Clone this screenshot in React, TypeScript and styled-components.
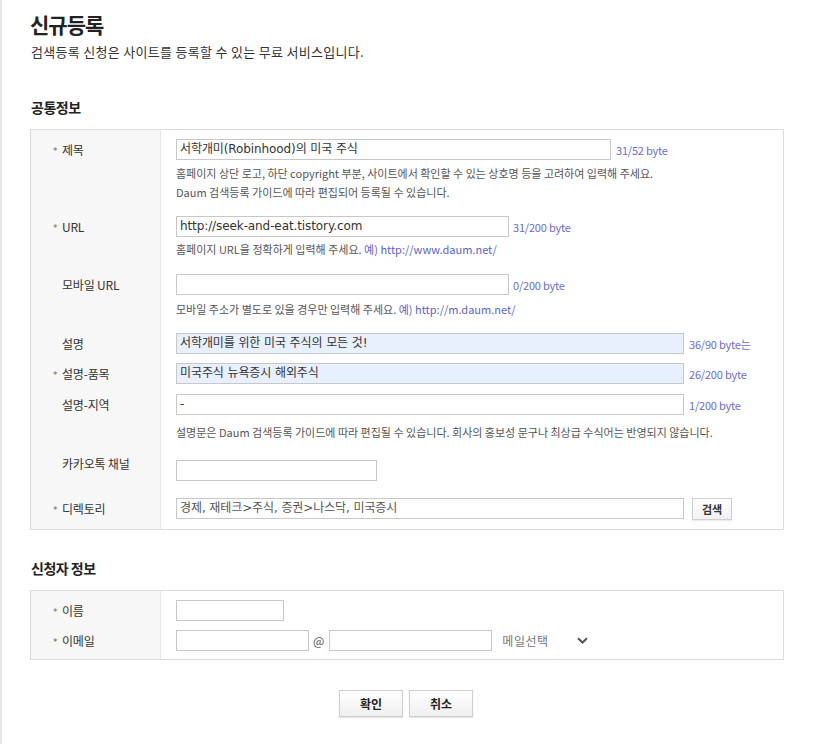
import React from "react";
import styled, { createGlobalStyle } from "styled-components";

const Global = createGlobalStyle`
  html, body { margin: 0; padding: 0; background: #fff; }
  body { font-family: "Noto Sans CJK KR", "Noto Sans", sans-serif; color: #333; }
  * { box-sizing: border-box; }
`;

const Page = styled.div`
  border-left: 2px solid #e6e6e6;
  min-height: 744px;
  padding: 11px 34px 0 28px;
  width: 817px;
`;

const Title = styled.h1`
  margin: 0;
  font-size: 21px;
  line-height: 26px;
  font-weight: 700;
  color: #222;
  letter-spacing: -1px;
`;

const Sub = styled.p`
  margin: 7px 0 0 1px;
  font-size: 13px;
  line-height: 16px;
  color: #333;
  letter-spacing: 0.3px;
`;

const SectionTitle = styled.h2<{ $mt: number }>`
  margin: ${(p) => p.$mt}px 0 0 1px;
  font-size: 14px;
  line-height: 18px;
  font-weight: 700;
  color: #222;
  letter-spacing: -0.5px;
`;

const Table = styled.div`
  margin-top: 13px;
  width: 754px;
  border: 1px solid #dcdcdc;
`;

const Row = styled.div<{ $pt: number; $pb: number }>`
  display: grid;
  grid-template-columns: 130px 1fr;
  & > * {
    padding-top: ${(p) => p.$pt}px;
    padding-bottom: ${(p) => p.$pb}px;
  }
`;

const Label = styled.div<{ $shift?: number }>`
  background: #f7f7f7;
  border-right: 1px solid #e6e6e6;
  padding-left: 22px;
  font-size: 12px;
  color: #333;
  letter-spacing: -0.2px;
  display: flex;
  align-items: flex-start;
  & > span.lbl {
    display: block;
    height: 21px;
    line-height: 21px;
    position: relative;
    top: ${(p) => p.$shift ?? 0}px;
  }
`;

const Star = styled.span`
  display: inline-block;
  width: 9px;
  color: #666;
  font-family: "DejaVu Sans", sans-serif;
  font-size: 9px;
  vertical-align: 1px;
`;

const Field = styled.div`
  padding-left: 15px;
  display: flex;
  flex-direction: column;
`;

const Line = styled.div`
  display: flex;
  align-items: center;
  height: 21px;
`;

const Input = styled.div<{ $w: number; $fill?: boolean; $muted?: boolean }>`
  width: ${(p) => p.$w}px;
  height: 21px;
  border: 1px solid #c8c8c8;
  background: ${(p) => (p.$fill ? "#e8f0fe" : "#fff")};
  font-family: "DejaVu Sans", "Noto Sans CJK KR", sans-serif;
  font-size: 12px;
  line-height: 19px;
  padding-left: 3px;
  color: ${(p) => (p.$muted ? "#555" : "#333")};
  white-space: nowrap;
  overflow: hidden;
  letter-spacing: -0.1px;
`;

const Count = styled.span<{ $gap: number }>`
  margin-left: ${(p) => p.$gap}px;
  font-size: 11px;
  color: #6b6bcf;
  letter-spacing: -0.2px;
`;

const Help = styled.p<{ $mt: number }>`
  margin: ${(p) => p.$mt}px 0 0 0;
  font-size: 11px;
  line-height: 19px;
  color: #555;
  letter-spacing: 0;
`;

const Link = styled.span`
  color: #5a64c8;
`;

const SmallBtn = styled.button`
  margin-left: 8px;
  width: 40px;
  height: 22px;
  border: 1px solid #cfcfcf;
  background: linear-gradient(#ffffff, #f1f1f1);
  box-shadow: 0 1px 1px rgba(0, 0, 0, 0.08);
  font-family: "Noto Sans CJK KR", sans-serif;
  font-size: 11px;
  font-weight: 700;
  color: #333;
  padding: 0;
`;

const At = styled.span`
  margin: 0 5px 0 4px;
  font-size: 12px;
  color: #555;
`;

const MailSelect = styled.div`
  margin-left: 10px;
  width: 90px;
  display: flex;
  align-items: center;
  justify-content: space-between;
  font-size: 12px;
  color: #777;
  letter-spacing: 0.5px;
  svg { margin-right: 4px; }
`;

const Buttons = styled.div`
  margin-top: 30px;
  width: 754px;
  display: flex;
  justify-content: center;
  gap: 6px;
  padding-right: 2px;
`;

const Btn = styled.button`
  width: 64px;
  height: 27px;
  border: 1px solid #cfcfcf;
  background: linear-gradient(#ffffff, #efefef);
  box-shadow: 0 1px 1px rgba(0, 0, 0, 0.1);
  font-family: "Noto Sans CJK KR", sans-serif;
  font-size: 12px;
  font-weight: 700;
  color: #222;
  padding: 0;
`;

function L({ req, text, shift }: { req?: boolean; text: string; shift?: number }) {
  return (
    <Label $shift={shift}>
      <span className="lbl">
        <Star>{req ? "*" : ""}</Star>
        {text}
      </span>
    </Label>
  );
}

export default function App() {
  return (
    <>
      <Global />
      <Page>
        <Title>신규등록</Title>
        <Sub>검색등록 신청은 사이트를 등록할 수 있는 무료 서비스입니다.</Sub>

        <SectionTitle $mt={38}>공통정보</SectionTitle>
        <Table>
          <Row $pt={9} $pb={4}>
            <L req text="제목" />
            <Field>
              <Line>
                <Input $w={435}>서학개미(Robinhood)의 미국 주식</Input>
                <Count $gap={5}>31/52 byte</Count>
              </Line>
              <Help $mt={4}>
                홈페이지 상단 로고, 하단 copyright 부분, 사이트에서 확인할 수 있는 상호명 등을 고려하여 입력해 주세요.
                <br />
                Daum 검색등록 가이드에 따라 편집되어 등록될 수 있습니다.
              </Help>
            </Field>
          </Row>
          <Row $pt={10} $pb={5}>
            <L req text="URL" />
            <Field>
              <Line>
                <Input $w={333}>http://seek-and-eat.tistory.com</Input>
                <Count $gap={4}>31/200 byte</Count>
              </Line>
              <Help $mt={3}>
                홈페이지 URL을 정확하게 입력해 주세요. <Link>예) http://www.daum.net/</Link>
              </Help>
            </Field>
          </Row>
          <Row $pt={10} $pb={4}>
            <L text="모바일 URL" />
            <Field>
              <Line>
                <Input $w={333} />
                <Count $gap={4}>0/200 byte</Count>
              </Line>
              <Help $mt={5}>
                모바일 주소가 별도로 있을 경우만 입력해 주세요. <Link>예) http://m.daum.net/</Link>
              </Help>
            </Field>
          </Row>
          <Row $pt={10} $pb={0}>
            <L text="설명" />
            <Field>
              <Line>
                <Input $w={508} $fill>서학개미를 위한 미국 주식의 모든 것!</Input>
                <Count $gap={5}>36/90 byte는</Count>
              </Line>
            </Field>
          </Row>
          <Row $pt={9} $pb={0}>
            <L req text="설명-품목" />
            <Field>
              <Line>
                <Input $w={508} $fill>미국주식 뉴욕증시 해외주식</Input>
                <Count $gap={5}>26/200 byte</Count>
              </Line>
            </Field>
          </Row>
          <Row $pt={10} $pb={0}>
            <L text="설명-지역" />
            <Field>
              <Line>
                <Input $w={508}>-</Input>
                <Count $gap={5}>1/200 byte</Count>
              </Line>
              <Help $mt={8}>
                설명문은 Daum 검색등록 가이드에 따라 편집될 수 있습니다. 회사의 홍보성 문구나 최상급 수식어는 반영되지 않습니다.
              </Help>
            </Field>
          </Row>
          <Row $pt={18} $pb={0}>
            <L text="카카오톡 채널" shift={-7} />
            <Field>
              <Line>
                <Input $w={201} />
              </Line>
            </Field>
          </Row>
          <Row $pt={17} $pb={10}>
            <L req text="디렉토리" />
            <Field>
              <Line>
                <Input $w={508} $muted>
                  경제, 재테크&gt;주식, 증권&gt;나스닥, 미국증시
                </Input>
                <SmallBtn>검색</SmallBtn>
              </Line>
            </Field>
          </Row>
        </Table>

        <SectionTitle $mt={29}>신청자 정보</SectionTitle>
        <Table>
          <Row $pt={9} $pb={0}>
            <L req text="이름" />
            <Field>
              <Line>
                <Input $w={108} />
              </Line>
            </Field>
          </Row>
          <Row $pt={9} $pb={8}>
            <L req text="이메일" />
            <Field>
              <Line>
                <Input $w={133} />
                <At>@</At>
                <Input $w={163} />
                <MailSelect>
                  메일선택
                  <svg width="11" height="7" viewBox="0 0 11 7">
                    <path d="M1 1.2 L5.5 5.5 L10 1.2" fill="none" stroke="#555" strokeWidth="2" />
                  </svg>
                </MailSelect>
              </Line>
            </Field>
          </Row>
        </Table>

        <Buttons>
          <Btn>확인</Btn>
          <Btn>취소</Btn>
        </Buttons>
      </Page>
    </>
  );
}
